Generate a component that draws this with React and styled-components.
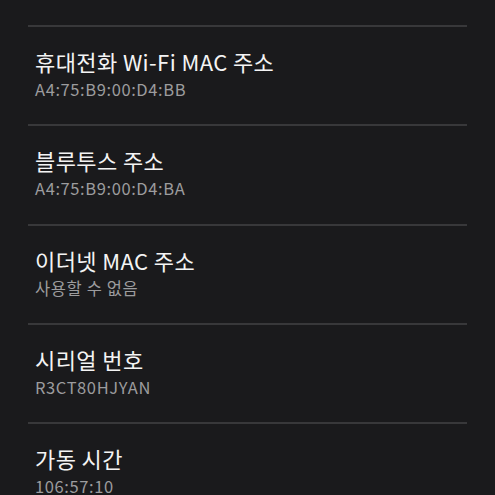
import React from 'react';
import styled, { createGlobalStyle } from 'styled-components';

const GlobalStyle = createGlobalStyle`
    html, body {
        margin: 0;
        padding: 0;
        background: #1a1a1c;
    }
    body {
        font-family: "Noto Sans CJK KR", "Noto Sans", sans-serif;
    }
`;

const Wrapper = styled.div`
    // 전체 화면
    width: 495px;
    height: 495px;
    overflow: hidden;
    background: #1a1a1c;
    padding-top: 25px;
    box-sizing: border-box;
`;

const List = styled.div`
    display: flex;
    flex-direction: column;
    margin: 0 28px;
`;

const Item = styled.div`
    height: 99.3px;
    box-sizing: border-box;
    border-top: 2px solid #38383a;
    padding: 20px 7px 0;
    display: flex;
    flex-direction: column;
`;

const Title = styled.div`
    color: #f4f4f4;
    font-size: 22px;
    line-height: 28px;
    letter-spacing: 0.4px;
`;

const Value = styled.div`
    color: #9c9c9e;
    font-size: 16.5px;
    line-height: 24px;
    letter-spacing: 0.6px;
    margin-top: 2px;
`;

const items = [
    { title: '휴대전화 Wi-Fi MAC 주소', value: 'A4:75:B9:00:D4:BB' },
    { title: '블루투스 주소', value: 'A4:75:B9:00:D4:BA' },
    { title: '이더넷 MAC 주소', value: '사용할 수 없음' },
    { title: '시리얼 번호', value: 'R3CT80HJYAN' },
    { title: '가동 시간', value: '106:57:10' },
];

const App = () => {
    return (
        <Wrapper>
            <GlobalStyle />
            <List>
                {items.map(item => (
                    <Item key={item.title}>
                        <Title>{item.title}</Title>
                        <Value>{item.value}</Value>
                    </Item>
                ))}
            </List>
        </Wrapper>
    );
};

export default App;
